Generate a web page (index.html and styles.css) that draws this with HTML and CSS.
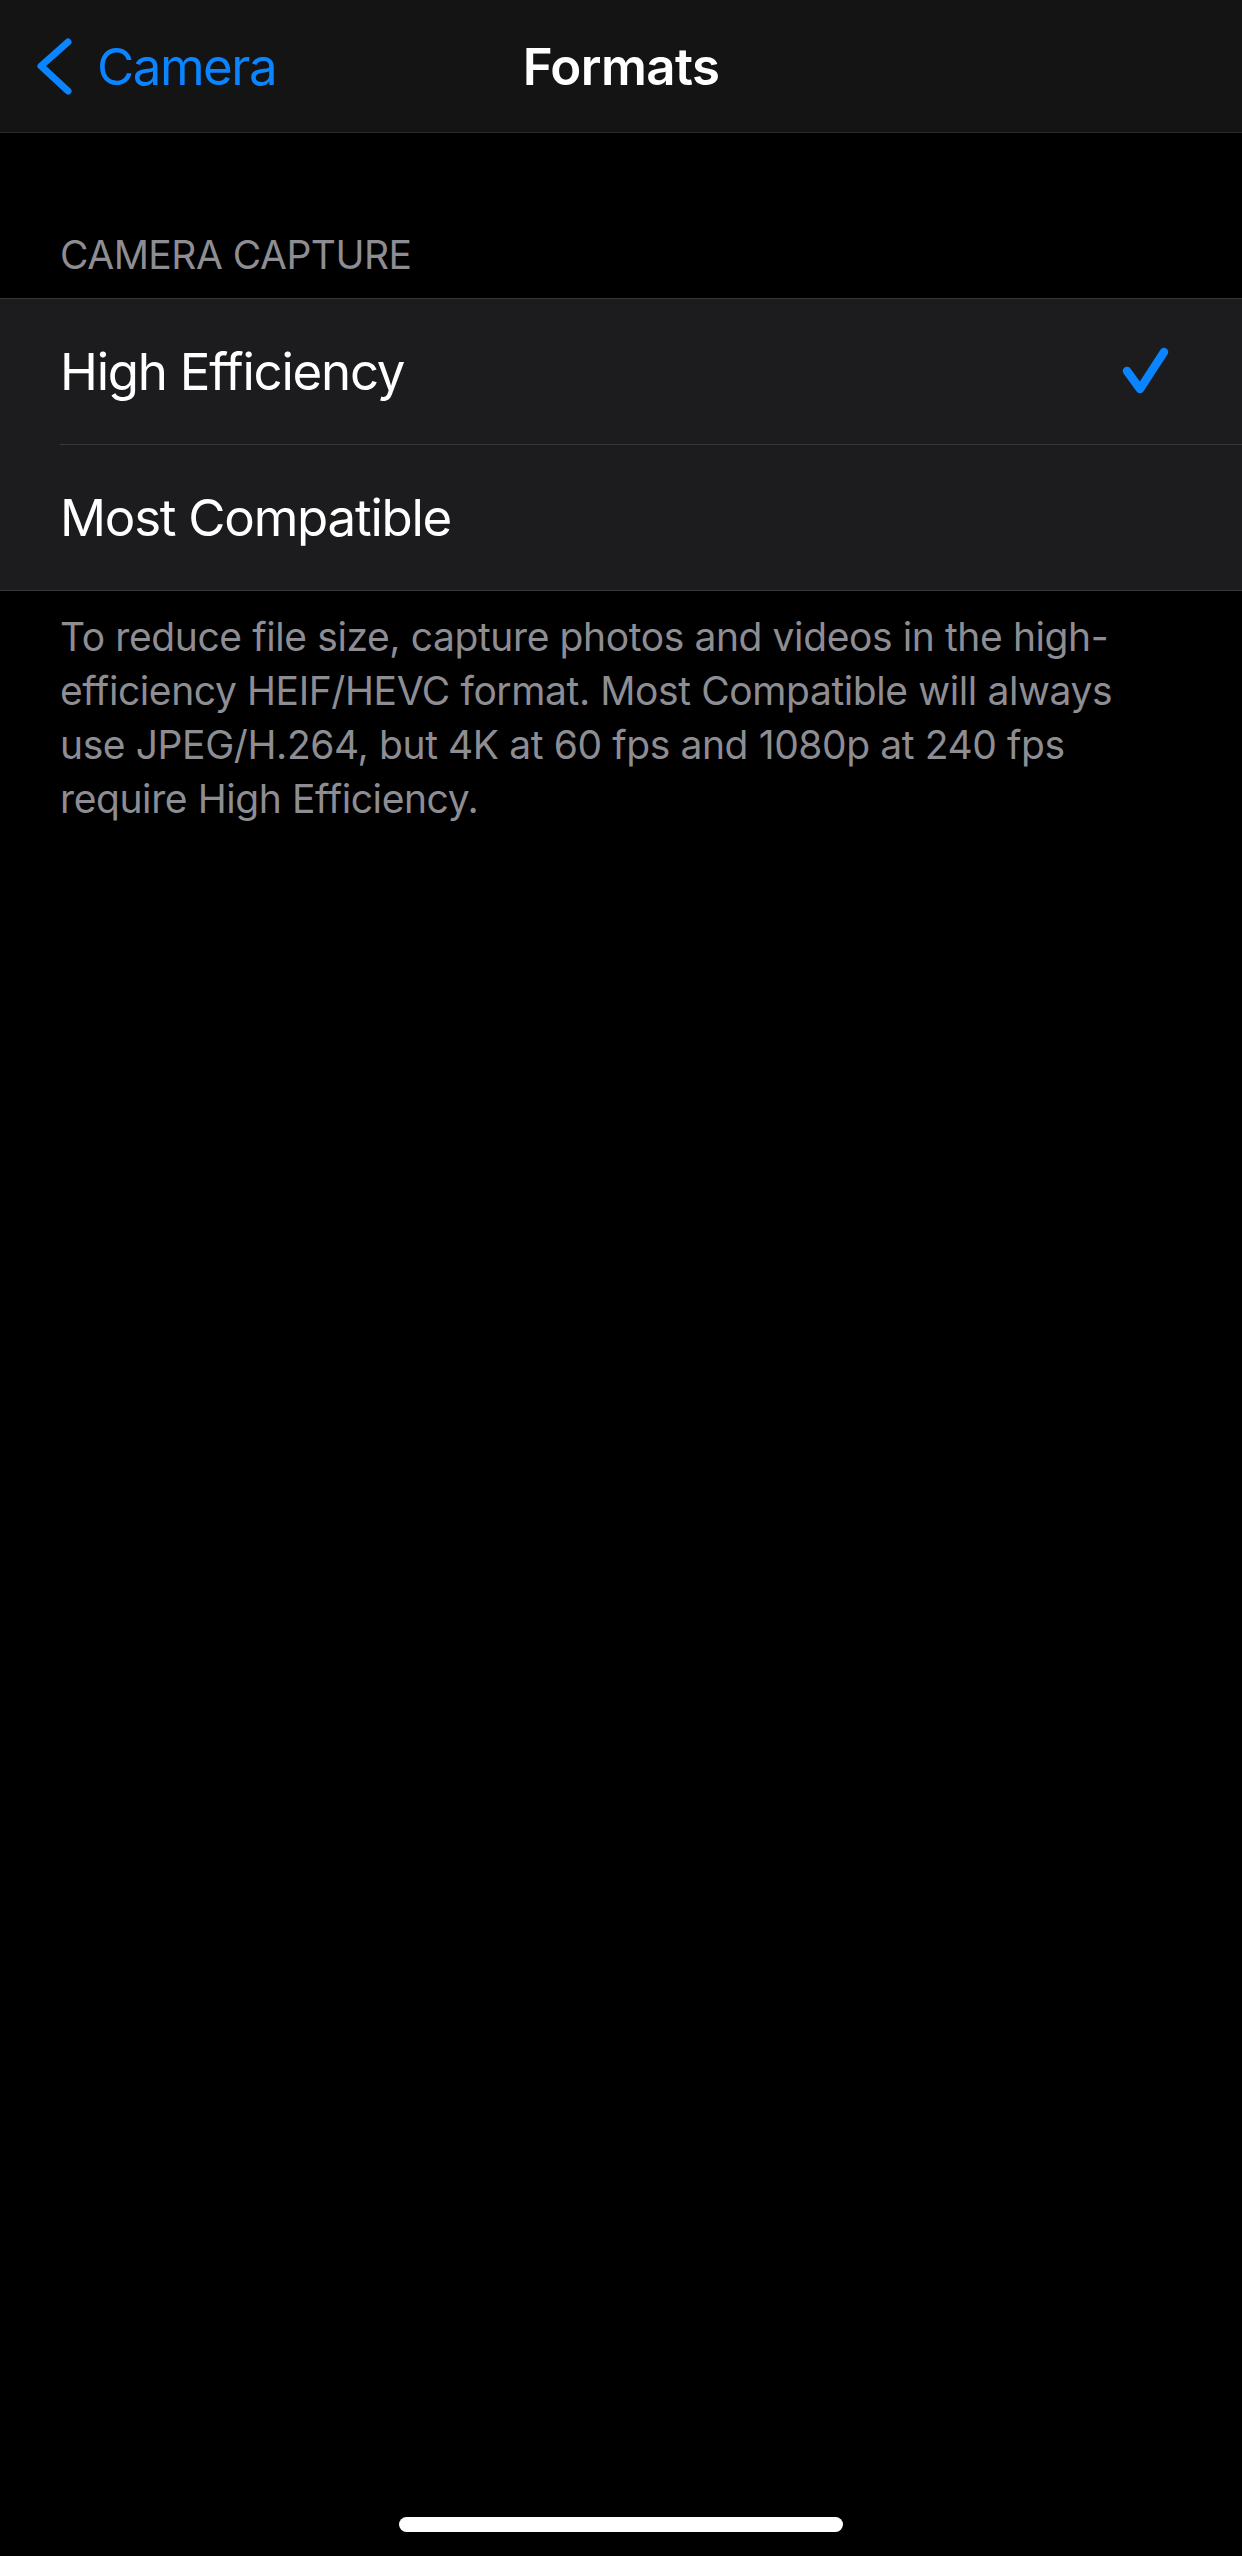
FILE: index.html
```html
<!doctype html>
<html>
    <head>
        <title>Formats</title>
        <meta charset="utf-8">
        <meta name="viewport" content="width=device-width">

        <link rel="stylesheet" href="styles.css">
    </head>

    <body>
        <header class="navbar">
            <a class="back" href="#">
                <svg class="chevron" width="40" height="62" viewBox="0 0 40 62">
                    <path d="M34 7 L7 31 L34 56" fill="none" stroke="#0a84ff" stroke-width="7" stroke-linecap="round" stroke-linejoin="round"/>
                </svg>
                <span>Camera</span>
            </a>
            <h1 class="title">Formats</h1>
            <div></div>
        </header>

        <section class="group">
            <h2 class="group-header">CAMERA CAPTURE</h2>
            <ul class="rows">
                <li class="row selected">
                    <span>High Efficiency</span>
                    <svg class="check" width="50" height="48" viewBox="0 0 50 48">
                        <path d="M7 24 L20 42 L44 5" fill="none" stroke="#0a84ff" stroke-width="8.5" stroke-linecap="round" stroke-linejoin="round"/>
                    </svg>
                </li>
                <li class="row">
                    <span>Most Compatible</span>
                </li>
            </ul>
            <p class="group-footer">To reduce file size, capture photos and videos in the high-efficiency HEIF/HEVC format. Most Compatible will always use JPEG/H.264, but 4K at 60 fps and 1080p at 240 fps require High Efficiency.</p>
        </section>

        <div class="home-indicator"></div>
    </body>
</html>
```

FILE: styles.css
```css
body {
    background-color: #000;
    color: #fff;
    margin: 0;
    min-height: 100vh;
    font-family: Inter, "Noto Sans", sans-serif;
    position: relative;
}

.navbar {
    display: grid;
    grid-template-columns: 1fr auto 1fr;
    align-items: center;
    height: 132px;
    background-color: #141414;
    border-bottom: 1px solid #2a2a2c;
}
.back {
    display: flex;
    align-items: center;
    gap: 23px;
    padding-left: 34px;
    color: #0a84ff;
    text-decoration: none;
    font-size: 51px;
    line-height: 51px;
    letter-spacing: -1.5px;
}
.title {
    margin: 0;
    font-size: 51px;
    line-height: 51px;
    font-weight: 600;
    letter-spacing: -0.6px;
}

.group {
    padding-top: 102px;
}
.group-header {
    margin: 0;
    padding: 0 60px 24px;
    font-size: 39px;
    line-height: 39px;
    font-weight: 400;
    letter-spacing: -0.5px;
    color: #8d8d93;
}
.rows {
    list-style-type: none;
    margin: 0;
    padding: 0;
    background-color: #1c1c1e;
    border-top: 1px solid #38383a;
    border-bottom: 1px solid #38383a;
}
.row {
    display: flex;
    align-items: center;
    justify-content: space-between;
    height: 145px;
    margin-left: 60px;
    padding-right: 72px;
    font-size: 51px;
    line-height: 51px;
    letter-spacing: -1.25px;
}
.row + .row {
    border-top: 1px solid #38383a;
}
.check {
    margin-top: -2px;
}
.group-footer {
    margin: 19px 0 0;
    padding: 0 60px;
    font-size: 39px;
    line-height: 54px;
    letter-spacing: -0.4px;
    color: #8d8d93;
}

.home-indicator {
    position: absolute;
    left: 399px;
    bottom: 24px;
    width: 444px;
    height: 15px;
    border-radius: 8px;
    background-color: #fff;
}
```
